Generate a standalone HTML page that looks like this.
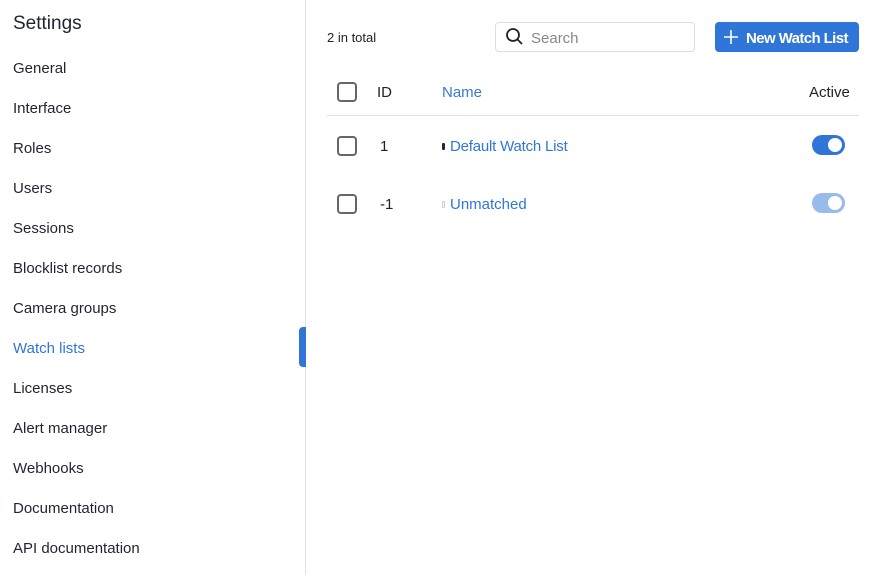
<!DOCTYPE html>
<html><head><style>
*{margin:0;padding:0;box-sizing:border-box}
body{width:877px;height:575px;background:#fff;font-family:"Liberation Sans",sans-serif;color:#222;position:relative;overflow:hidden}
.a{position:absolute;white-space:nowrap}
.side{left:0;top:0;width:306px;height:575px;border-right:1px solid #dde2ee}
.nav{left:13px;font-size:15px;color:#1f2430}
.cb{position:absolute;width:20px;height:20px;border:2px solid #666;border-radius:4px;left:337px}
.tg{position:absolute;left:812px;width:33px;height:20px;border-radius:10px;background:#2f76d8}
.tg::after{content:"";position:absolute;right:3px;top:3px;width:14px;height:14px;border-radius:50%;background:#fff}
</style></head><body>
<div class="a side"></div>
<div class="a" style="left:299px;top:327px;width:7px;height:40px;background:#2f76d8;border-radius:4px 0 0 4px"></div>
<div class="a" style="left:13px;top:13px;font-size:19px;color:#1f2430">Settings</div>
<div class="a nav" style="top:60px">General</div>
<div class="a nav" style="top:100px">Interface</div>
<div class="a nav" style="top:140px">Roles</div>
<div class="a nav" style="top:180px">Users</div>
<div class="a nav" style="top:220px">Sessions</div>
<div class="a nav" style="top:260px">Blocklist records</div>
<div class="a nav" style="top:300px">Camera groups</div>
<div class="a nav" style="top:340px;color:#2f76d8">Watch lists</div>
<div class="a nav" style="top:380px">Licenses</div>
<div class="a nav" style="top:420px">Alert manager</div>
<div class="a nav" style="top:460px">Webhooks</div>
<div class="a nav" style="top:500px">Documentation</div>
<div class="a nav" style="top:540px">API documentation</div>

<div class="a" style="left:327px;top:30px;font-size:13px">2 in total</div>
<div class="a" style="left:495px;top:22px;width:200px;height:30px;border:1px solid #d8dde6;border-radius:4px"></div>
<svg class="a" style="left:505px;top:27px" width="20" height="20" viewBox="0 0 20 20"><circle cx="8" cy="8" r="6" fill="none" stroke="#222" stroke-width="1.8"/><line x1="12.5" y1="12.5" x2="17" y2="17" stroke="#222" stroke-width="1.8"/></svg>
<div class="a" style="left:531px;top:30px;font-size:15px;color:#888">Search</div>
<div class="a" style="left:715px;top:22px;width:144px;height:30px;background:#2f76d8;border-radius:4px"></div>
<svg class="a" style="left:722px;top:28px" width="18" height="18" viewBox="0 0 18 18"><path d="M9 2V16M2 9H16" stroke="#fff" stroke-width="1.6"/></svg>
<div class="a" style="left:746px;top:30px;font-size:15px;color:#fff;font-weight:bold;letter-spacing:-0.6px">New Watch List</div>

<div class="cb" style="top:82px"></div>
<div class="a" style="left:377px;top:84px;font-size:15px">ID</div>
<div class="a" style="left:442px;top:84px;font-size:15px;color:#3b78d0">Name</div>
<div class="a" style="left:809px;top:84px;font-size:15px">Active</div>
<div class="a" style="left:327px;top:115px;width:532px;height:1px;background:#dde2ee"></div>

<div class="cb" style="top:136px"></div>
<div class="a" style="left:380px;top:138px;font-size:15px">1</div>
<div class="a" style="left:442px;top:143px;width:3px;height:7px;background:#1f2a44;border-radius:1px"></div>
<div class="a" style="left:450px;top:138px;font-size:15px;color:#2f76d8;letter-spacing:-0.2px">Default Watch List</div>
<div class="tg" style="top:135px"></div>

<div class="cb" style="top:194px"></div>
<div class="a" style="left:380px;top:196px;font-size:15px">-1</div>
<div class="a" style="left:442px;top:201px;width:3px;height:7px;border:1px solid #ccc;border-radius:1px"></div>
<div class="a" style="left:450px;top:196px;font-size:15px;color:#2f76d8">Unmatched</div>
<div class="tg" style="top:193px;background:#98bbec"></div>
</body></html>
